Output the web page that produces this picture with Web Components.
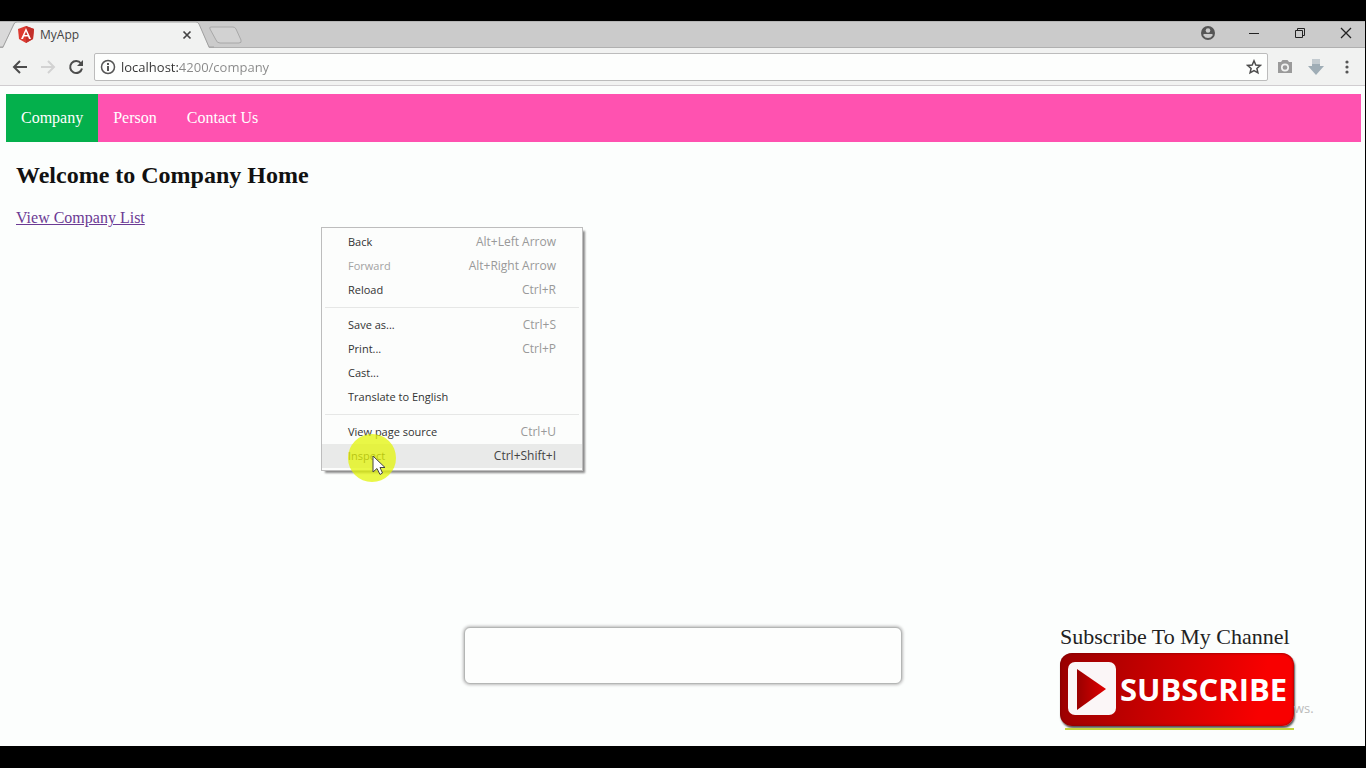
<!DOCTYPE html>
<html lang="en">
<head>
<meta charset="utf-8">
<title>MyApp</title>
<style>
html,body{margin:0;height:100%;background:#000}
body{font-family:"Open Sans","Noto Sans",sans-serif;overflow:hidden}
</style>
</head>
<body>
<browser-window>
  <tab-strip slot="tabs">MyApp</tab-strip>
  <tool-bar slot="toolbar" address="localhost:4200/company"></tool-bar>
  <site-nav>
    <nav-item href="#company" active>Company</nav-item>
    <nav-item href="#person">Person</nav-item>
    <nav-item href="#contact">Contact Us</nav-item>
  </site-nav>
  <company-home></company-home>
  <context-menu>
    <menu-row keys="Alt+Left Arrow">Back</menu-row>
    <menu-row keys="Alt+Right Arrow" disabled>Forward</menu-row>
    <menu-row keys="Ctrl+R">Reload</menu-row>
    <menu-line></menu-line>
    <menu-row keys="Ctrl+S">Save as...</menu-row>
    <menu-row keys="Ctrl+P">Print...</menu-row>
    <menu-row>Cast...</menu-row>
    <menu-row>Translate to English</menu-row>
    <menu-line></menu-line>
    <menu-row keys="Ctrl+U">View page source</menu-row>
    <menu-row keys="Ctrl+Shift+I" active>Inspect</menu-row>
  </context-menu>
  <click-pointer></click-pointer>
  <caption-box></caption-box>
  <subscribe-badge></subscribe-badge>
</browser-window>
<script>
function define(name, render) {
  customElements.define(name, class extends HTMLElement {
    constructor() {
      super();
      this.attachShadow({ mode: 'open' });
    }
    connectedCallback() {
      this.shadowRoot.innerHTML = render(this);
    }
  });
}

define('browser-window', () => `
<style>
:host{display:grid;grid-template-rows:auto auto 1fr;box-sizing:border-box;height:100vh;padding:21px 1px 22px 0;background:#000}
main{position:relative;background:#fcfefd;padding:8px 4px 0 6px;overflow:hidden}
</style>
<slot name="tabs"></slot>
<slot name="toolbar"></slot>
<main><slot></slot></main>`);

define('tab-strip', () => `
<style>
:host{display:flex;height:27px;background:#cbcbcb;box-shadow:inset 0 1px #b5b5b5,inset 0 -1px #b0b0b0;font-size:12px;color:#444}
.tab{position:relative;display:flex;align-items:center;gap:6px;box-sizing:border-box;width:206px;padding:0 12px 0 18px}
.shape{position:absolute;left:0;top:0}
.logo,.name,.close{position:relative}
.name{flex:1}
button{border:0;padding:0;background:none;display:flex;color:inherit}
.new{align-self:center}
.controls{margin-left:auto;display:flex;align-items:center;gap:32px;padding:0 12px 4px 0}
</style>
<div class="tab">
  <svg class="shape" width="214" height="27"><path d="M0 1H14L3 26H0z" fill="#d9d9d9"/><path d="M3 27L14 3Q15 1 17 1H196Q198 1 199 3L209 27z" fill="#f1f2f1"/><path d="M0 26H3L14 3Q15 1 17 1H196Q198 1 199 3L209 26H214" fill="none" stroke="#a0a0a0"/></svg>
  <svg class="logo" width="16" height="17" viewBox="0 0 16 17"><path d="M8 0L16 3L15 13L8 17L1 13L0 3z" fill="#dd3b31"/><path d="M8 0L16 3L15 13L8 17z" fill="#c3302b"/><path d="M8 2L3 13H5L6 10.500H10L11 13H13zM8 5.500L9.500 9H6.500z" fill="#fff" fill-rule="evenodd"/></svg>
  <span class="name"><slot></slot></span>
  <button class="close" aria-label="Close tab"><svg width="14" height="14" viewBox="0 0 14 14"><path d="M3.500 3.500L10.500 10.500M10.500 3.500L3.500 10.500" stroke="#444" stroke-width="1.700"/></svg></button>
</div>
<button class="new" aria-label="New tab"><svg width="38" height="18"><path d="M5 1H27Q29 1 30 3L35 14Q36 17 33 17H14Q11 17 10 14L4 3Q3 1 5 1z" fill="#d2d2d2" stroke="#a8a8a8"/></svg></button>
<div class="controls">
  <button aria-label="Profile"><svg width="14" height="14" viewBox="0 0 14 14"><circle cx="7" cy="7" r="7" fill="#555"/><circle cx="7" cy="4.500" r="2.300" fill="#cbcbcb"/><path d="M2.500 8H11.500V9.500Q10 12 7 12T2.500 9.500z" fill="#cbcbcb"/></svg></button>
  <button aria-label="Minimize"><svg width="14" height="14"><path d="M2 7.500H12" stroke="#222"/></svg></button>
  <button aria-label="Restore"><svg width="14" height="14" fill="none" stroke="#222"><path d="M2.500 4.500H9.500V11.500H2.500zM4.500 4V2.500H11.500V9.500H10"/></svg></button>
  <button aria-label="Close"><svg width="14" height="14"><path d="M2 2L12 12M12 2L2 12" stroke="#222" stroke-width="1.300"/></svg></button>
</div>`);

define('tool-bar', host => `
<style>
:host{display:flex;align-items:center;box-sizing:border-box;height:38px;padding:0 9px 0 10px;background:#f1f2f1;border-bottom:1px solid #d0cdd0}
button{border:0;padding:0;background:none;display:flex}
.go,.extra{display:flex;align-items:center}
.go{gap:8px}
.extra{gap:13px}
form{flex:1;display:flex;align-items:center;gap:5px;box-sizing:border-box;height:28px;margin:0 8px 0 8px;padding:0 5px 0 5px;background:#fdfefd;border:1px solid #bcbcbc;border-radius:2px}
input{flex:1;min-width:0;border:0;padding:0;outline:0;height:24px;font:13px "Open Sans","Noto Sans",sans-serif;-webkit-text-fill-color:transparent;color:#777;background:linear-gradient(90deg,#333 58px,#888 58px);-webkit-background-clip:text;background-clip:text}
</style>
<div class="go">
  <button aria-label="Back"><svg width="20" height="20" fill="none" stroke="#4c4c4c" stroke-width="2"><path d="M17 10H4M10 4L4 10L10 16"/></svg></button>
  <button aria-label="Forward" disabled><svg width="20" height="20" fill="none" stroke="#d2d2d2" stroke-width="2"><path d="M3 10H16M10 4L16 10L10 16"/></svg></button>
  <button aria-label="Reload"><svg width="20" height="20"><path d="M15 6.500A6 6 0 1 0 16 11.500" fill="none" stroke="#4c4c4c" stroke-width="2"/><path d="M17 3V9H11z" fill="#4c4c4c"/></svg></button>
</div>
<form>
  <svg width="16" height="16"><circle cx="8" cy="8" r="6.500" fill="none" stroke="#555" stroke-width="1.500"/><path d="M8 7V12M8 4V6" stroke="#555" stroke-width="2"/></svg>
  <input aria-label="Address" value="${host.getAttribute('address')}">
  <button type="button" aria-label="Bookmark"><svg width="16" height="16"><path d="M8 1.800L9.800 6L14.300 6.400L10.900 9.400L11.900 13.800L8 11.500L4.100 13.800L5.100 9.400L1.700 6.400L6.200 6z" fill="none" stroke="#4c4c4c" stroke-width="1.500"/></svg></button>
</form>
<div class="extra">
  <button aria-label="Screenshot"><svg width="18" height="18"><path d="M2 4H5L6.500 2H11.500L13 4H16V15H2z" fill="#9a9a9a"/><circle cx="9" cy="9.500" r="3.200" fill="none" stroke="#f1f2f1" stroke-width="1.700"/></svg></button>
  <button aria-label="Downloads"><svg width="18" height="18"><path d="M5 1H13V8H17L9 17L1 8H5z" fill="#9fadb6"/><path d="M5 1H13V6H5z" fill="#c3cbd0"/></svg></button>
  <button aria-label="Menu"><svg width="18" height="18" fill="#555"><circle cx="9" cy="4" r="1.600"/><circle cx="9" cy="9" r="1.600"/><circle cx="9" cy="14" r="1.600"/></svg></button>
</div>`);

define('site-nav', () => `
<style>
:host{display:block;font:16px "Liberation Serif",serif}
nav{display:flex;background:#ff52b0}
</style>
<nav><slot></slot></nav>`);

define('nav-item', host => `
<style>
:host{display:block}
:host([active]){background:#04b04c}
a{display:block;padding:14px 15px;line-height:20px;color:#fff;text-decoration:none}
</style>
<a href="${host.getAttribute('href')}"><slot></slot></a>`);

define('company-home', () => `
<style>
:host{display:block;padding:18px 10px;font:16px/20px "Liberation Serif",serif}
h2{margin:0 0 18px;font-size:24px;line-height:30px;color:#111}
a{color:#6b3a94}
</style>
<h2>Welcome to Company Home</h2>
<a href="#list">View Company List</a>`);

define('context-menu', () => `
<style>
:host{position:absolute;left:321px;top:141px;width:260px;padding:2px 0;background:#fcfdfc;border:1px solid #bdbdbd;box-shadow:3px 3px 2px -1px #8a8a8a;font-size:11px}
</style>
<div role="menu"><slot></slot></div>`);

define('menu-row', host => `
<style>
:host{display:block}
button{display:flex;justify-content:space-between;align-items:center;width:100%;height:24px;border:0;padding:0 26px 2px;background:none;font:inherit;color:#333}
span{font-size:12px;color:#999}
:host([disabled]) button{color:#a3a3a3}
:host([active]) button{background:#e9eae9}
:host([active]) span{color:#444}
</style>
<button role="menuitem" ${host.hasAttribute('disabled') ? 'disabled' : ''}><slot></slot><span>${host.getAttribute('keys') || ''}</span></button>`);

define('menu-line', () => `
<style>
:host{display:block;height:1px;margin:5px 3px;background:#e6e7e6}
</style>`);

define('click-pointer', () => `
<style>
:host{position:absolute;left:347px;top:347px;pointer-events:none}
svg{display:block}
</style>
<svg width="50" height="50"><circle cx="25" cy="25" r="24" fill="#e3f40a" fill-opacity=".75"/><path d="M26 23V39L30 35.500L33 41.500L35.500 40L33 34.500H38z" fill="#fff" stroke="#444"/></svg>`);

define('caption-box', () => `
<style>
:host{position:absolute;left:0;right:0;bottom:62px;width:436px;height:55px;margin:auto;border:1px solid #b4b6b5;border-radius:6px;background:#fdfefd;box-shadow:0 0 3px 1px #bbb}
</style>`);

define('subscribe-badge', () => `
<style>
:host{position:absolute;right:71px;bottom:16px;width:234px}
p{margin:0;font:22px/32px "Liberation Serif",serif;color:#222;white-space:nowrap}
button{display:flex;align-items:center;gap:4px;box-sizing:border-box;width:100%;height:73px;padding:0 8px 2px;border:0;border-radius:12px;background:linear-gradient(100deg,#980000,#c80000 40%,#f80000 85%);box-shadow:inset 0 0 3px #700,1px 2px 2px #555;color:#fff;font:bold 31px "Open Sans","Noto Sans",sans-serif}
button svg{flex:none}
.line{display:block;height:2px;margin:2px 0 0 5px;background:#c3d640}
small{position:absolute;left:100%;bottom:12px;font-size:13px;line-height:20px;color:#bbb}
</style>
<p>Subscribe To My Channel</p>
<button><svg width="48" height="53"><defs><linearGradient id="g"><stop stop-color="#900"/><stop offset="1" stop-color="#e00000"/></linearGradient></defs><rect width="48" height="53" rx="7" fill="#fbf6f7"/><path d="M9 7L38 27L9 48z" fill="url(#g)"/></svg><span>SUBSCRIBE</span></button>
<span class="line"></span>
<small>ws.</small>`);
</script>
</body>
</html>
